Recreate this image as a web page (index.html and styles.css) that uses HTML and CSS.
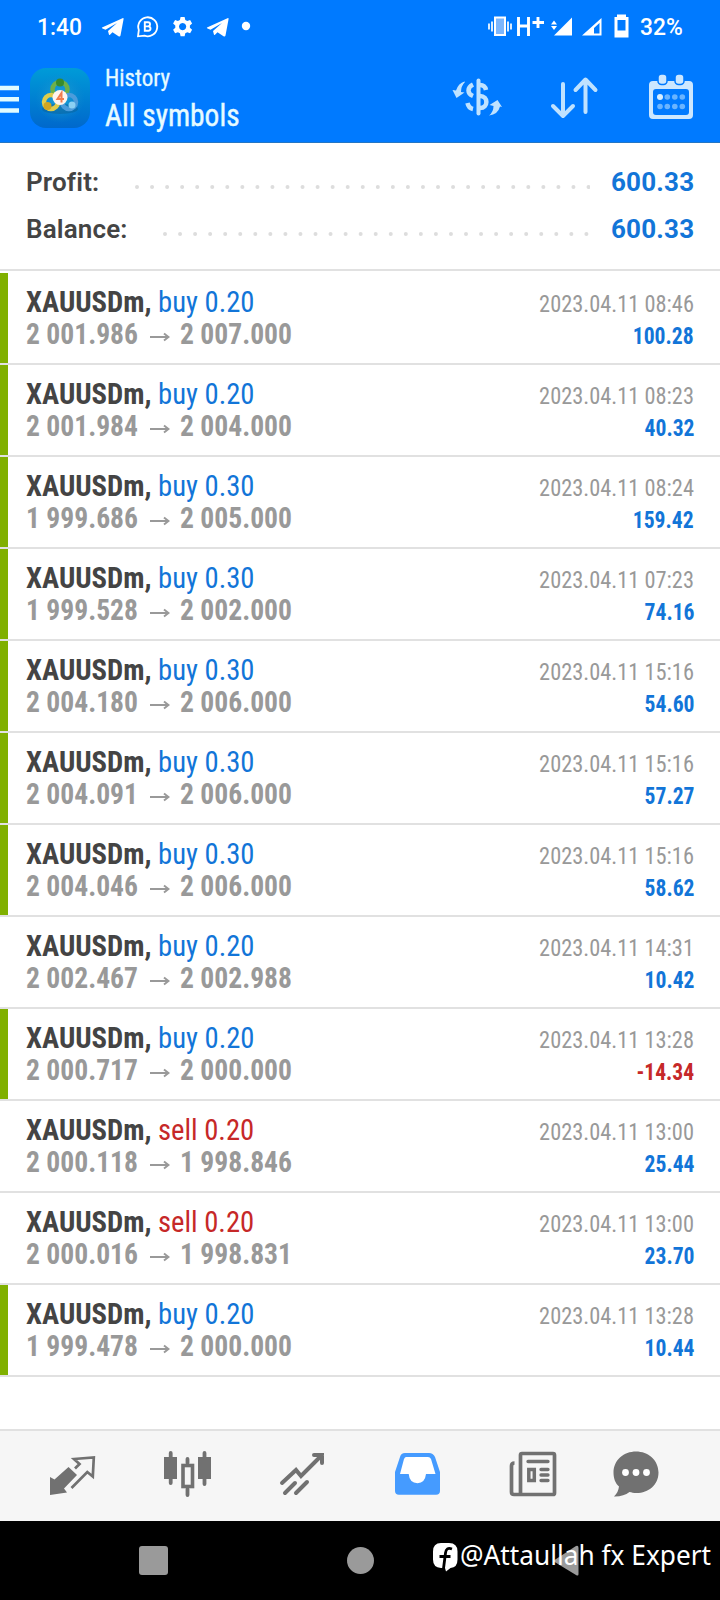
FILE: index.html
```html
<!DOCTYPE html>
<html lang="en">
<head>
<meta charset="utf-8">
<title>History</title>
<link rel="stylesheet" href="styles.css">
</head>
<body>
<header class="top">
  <div class="status">
    <span class="clock">1:40</span>
    <svg class="status-left" viewBox="100 14 152 26" width="152" height="26">
      <g fill="#fff">
        <path id="plane" d="M102 27.500 122.500 18.200Q124 17.800 123.500 19.500L120.500 35.500Q120 37 118.500 36.200L112.500 32.300 110 34.800Q109 35.500 108.800 34L108 31 117 23 105.500 29.800 102.500 28.500Q101.500 28 102 27.500Z"/>
        <use href="#plane" x="105"/>
        <circle cx="246" cy="26" r="4.200"/>
        <path fill-rule="evenodd" d="M180.600 17h4l.7 3 2 1 2.800-1 2 3.500-2.200 2v2.200l2.200 2-2 3.500-2.800-1-2 1.100-.7 2.900h-4l-.7-2.900-2-1.100-2.800 1-2-3.500 2.200-2v-2.200l-2.200-2 2-3.500 2.800 1 2-1zM182.600 23a3.600 3.600 0 1 0 .01 0z"/>
      </g>
      <path d="M138 36.300l.8-6.300A9.500 9.500 0 1 1 144.500 35.700Z" fill="none" stroke="#fff" stroke-width="1.800"/>
      <path d="M144.800 22.300v8.500h3.500a2.200 2.200 0 0 0 0-4.400h-3.500 3.200a2 2 0 0 0 0-4.100z" fill="none" stroke="#fff" stroke-width="1.900"/>
    </svg>
    <svg class="status-right" viewBox="486 12 146 28" width="146" height="28">
      <rect x="495" y="17.500" width="10" height="17.500" fill="#7db6fc" stroke="#fff" stroke-width="2"/>
      <path d="M489 23.500v6M492 21.500v10M508 21.500v10M511 23.500v6" stroke="#fff" stroke-width="1.700"/>
      <path d="M518.500 17v19M528.500 17v19M518.500 26h10M538 17v11M532.500 22.500h11.500" stroke="#fff" stroke-width="2.900" fill="none"/>
      <path d="M554 35.500 572 17.500V35.500ZM551 24.500l3-4 3 4zM551 26l3 4 3-4zM582 35.500 601.500 18V35.500Zm12-2h5.500V23l-5.500 5z" fill="#fff" fill-rule="evenodd"/>
      <path d="M617 17v-2.500h9V17h2.500v20.500h-14V17zM617.500 20v10.500h8V20z" fill="#fff" fill-rule="evenodd"/>
    </svg>
    <span class="percent">32%</span>
  </div>
  <div class="bar">
    <svg class="burger" viewBox="0 0 20 30" width="20" height="30"><path d="M0 3h19M0 14.300h19M0 25.500h19" stroke="#e0fbff" stroke-width="4.500"/></svg>
    <svg class="logo" viewBox="0 0 60 60" width="60" height="60">
      <defs>
        <linearGradient id="sky" x2="0" y2="1"><stop offset="0" stop-color="#009bd8"/><stop offset="1" stop-color="#0068cc"/></linearGradient>
        <radialGradient id="glow"><stop offset="0" stop-color="#22aedb"/><stop offset="1" stop-color="#1488cb" stop-opacity="0"/></radialGradient>
      </defs>
      <rect width="60" height="60" rx="16" fill="url(#sky)"/><circle cx="30" cy="30" r="25" fill="url(#glow)"/>
      <ellipse cx="30" cy="41" rx="18" ry="5" fill="#095f98" opacity=".5"/>
      <g fill="none" stroke-width="4.500">
        <circle cx="30" cy="21.500" r="7.500" stroke="#6eb04a"/><circle cx="21" cy="34" r="7" stroke="#dfcd4c"/><circle cx="39" cy="34" r="7" stroke="#4c9cdb"/>
      </g>
      <circle cx="30" cy="14.500" r="4" fill="#378b2d"/><circle cx="17.500" cy="38" r="4" fill="#d0a520"/><circle cx="42" cy="37" r="3.500" fill="#8bd0f3"/>
      <circle cx="30" cy="29.500" r="7.500" fill="#fff4ed"/><path d="M31.500 34.500V25L27.500 31h6.500" fill="none" stroke="#f07d4f" stroke-width="2"/>
    </svg>
    <div class="titles"><div class="small"><span>History</span></div><div class="big"><span>All symbols</span></div></div>
    <svg class="actions" viewBox="450 70 250 54" width="250" height="54">
      <g fill="none" stroke="#bfe2ff" stroke-linejoin="round">
        <path d="M478.500 80.500v33" stroke-width="4" stroke-linecap="round"/>
        <path d="M486 90q-1-5-6-5M480 96c8.500 0 8.500 12 0 12M473 84.500c-6 3-6 9 0 11.500M467.500 103q1 5 5.500 6" stroke-width="4.500"/>
      </g>
      <path d="M464.500 81.500q-6 1.500-8.500 9l-3.500-.5 4 8 8-5.500-3.500-.5q0-6 4-10zM489 115.500q9-1 11-9l2 .5-4.500-7-8 5 4 1q0 6-4.500 9.500z" fill="#bfe2ff"/>
      <path d="M563 84v31M553 106l10 10 10-10M585.500 112V80M575.500 90l10-10.500 10 10.500" fill="none" stroke="#bfe2ff" stroke-width="4" stroke-linecap="round" stroke-linejoin="round"/>
      <path d="M653 81h36q4 0 4 4v30q0 4-4 4h-36q-4 0-4-4V85q0-4 4-4zM656 89q-3 0-3 3v20q0 3 3 3h30q3 0 3-3V92q0-3-3-3z" fill="#cce7ff" fill-rule="evenodd"/>
      <g fill="#cce7ff" stroke="#007aff" stroke-width="1.500"><rect x="658" y="74" width="9" height="10.500" rx="3.500"/><rect x="675" y="74" width="9" height="10.500" rx="3.500"/></g>
      <g fill="#6ab4ff"><circle cx="660" cy="97" r="3" fill="#d9efff"/><circle cx="667.300" cy="97" r="2.800"/><circle cx="674.800" cy="97" r="2.800"/><circle cx="682.300" cy="97" r="2.800"/><circle cx="660" cy="106.500" r="2.800"/><circle cx="667.300" cy="106.500" r="2.800"/><circle cx="674.800" cy="106.500" r="2.800"/><circle cx="682.300" cy="106.500" r="2.800"/></g>
    </svg>
  </div>
</header>
<section class="summary">
  <div class="total"><b>Profit:</b><svg class="dots" width="458" height="6"><path d="M5 3H457.500" /></svg><strong>600.33</strong></div>
  <div class="total"><b>Balance:</b><svg class="dots" width="430" height="6"><path d="M5 3H428" /></svg><strong>600.33</strong></div>
</section>
<main id="deals"></main>
<nav class="tabs">
  <svg viewBox="0 1431 720 90" width="720" height="90">
    <g fill="none" stroke="#717171" stroke-linecap="round">
      <path d="M75 1468.500l4.500-4.500-5.500-5 19.800-1.500-1 19-5.500-4.500L71.500 1488" stroke-width="2.700" stroke-linecap="butt"/>
      <path d="M50 1477l4.500 2.500 14-12.500 8.500 8-13 13.500 3 4-17 2.500z" fill="#717171" stroke="none"/>
      <path d="M170.700 1453v30M204.500 1453v31M187.500 1459v4M187.500 1489v6" stroke-width="3.800"/>
      <path d="M164 1457h13v22h-13zM198 1457h13v22h-13z" fill="#717171" stroke="none"/>
      <rect x="183" y="1465.500" width="9.500" height="21" stroke-width="3.600"/>
      <path d="M282 1483l14-13 5 6 21-21M314 1455h8v8M285 1493l10-10M296 1493l11-11" stroke-width="4"/>
    </g>
    <path d="M405 1453h24q4 0 6 4l5 15v19q0 3.700-4 3.700h-37q-4 0-4-3.700v-19l5-15q1-4 5-4z" fill="#459bff"/>
    <path d="M406 1457h22q2 0 3 2l4.500 15H426q-1 9-8.500 9.300-8-.3-8.800-9.300H400l4-15q1-2 2-2z" fill="#fff"/>
    <path d="M522 1453.500h31q1.500 0 1.500 1.500v38q0 1.500-1.500 1.500h-31q-1.500 0-1.500-1.500v-38q0-1.500 1.500-1.500zM521 1494.500h-7q-2.500 0-2.500-2.500v-26q0-3 3-3" fill="none" stroke="#717171" stroke-width="3.700"/>
    <path d="M528 1461.500h20M541 1469.500h7M541 1475h7M541 1480.500h7" stroke="#717171" stroke-width="3.300" stroke-linecap="round"/>
    <rect x="528.800" y="1469.500" width="5.500" height="11" fill="none" stroke="#717171" stroke-width="3.500"/>
    <path d="M636 1451.500c12 0 22.500 8.500 22.500 21s-10 20.500-22 20.500c-3 0-5-.5-7-1-4 3-9 4.700-15.500 4.500 3-3 4.500-6 5-10-3.500-3-5.500-8-5.500-14 0-12.500 10.500-21 22.500-21z" fill="#717171"/>
    <g fill="#fff"><circle cx="625.500" cy="1472.500" r="3.400"/><circle cx="636" cy="1472.500" r="3.400"/><circle cx="646.500" cy="1472.500" r="3.400"/></g>
  </svg>
</nav>
<footer class="system">
  <svg class="keys" viewBox="0 1521 720 79" width="720" height="79">
    <rect x="139" y="1546" width="29" height="29" rx="3" fill="#9a9a9a"/>
    <circle cx="360.500" cy="1560.500" r="13.500" fill="#9a9a9a"/>
    <path d="M553 1561 576 1546q2.500-1 2.500 2v26q0 2.500-2.500 1z" fill="#9a9a9a"/>
  </svg>
  <div class="mark">
    <svg viewBox="0 0 26 30" width="26" height="30"><path d="M8 1h8q8.500 0 8.500 8.500v8q0 8-7 8.500l-4.500 3.500-1-3.500H8q-8-.500-8-8.500v-8Q0 1 8 1z" fill="#fff"/><path d="M19 7c-4-1.500-6 0-6.500 4l-2 15.500M6.500 14.500h11" fill="none" stroke="#000" stroke-width="2.800"/></svg>
    <span>@Attaullah fx Expert</span>
  </div>
</footer>
<script src="deals.js"></script>
</body>
</html>
```

FILE: deals.js
```js
const deals = [
  [1, 'buy', '0.20', '2 001.986', '2 007.000', '2023.04.11 08:46', '100.28'],
  [1, 'buy', '0.20', '2 001.984', '2 004.000', '2023.04.11 08:23', '40.32'],
  [1, 'buy', '0.30', '1 999.686', '2 005.000', '2023.04.11 08:24', '159.42'],
  [1, 'buy', '0.30', '1 999.528', '2 002.000', '2023.04.11 07:23', '74.16'],
  [1, 'buy', '0.30', '2 004.180', '2 006.000', '2023.04.11 15:16', '54.60'],
  [1, 'buy', '0.30', '2 004.091', '2 006.000', '2023.04.11 15:16', '57.27'],
  [1, 'buy', '0.30', '2 004.046', '2 006.000', '2023.04.11 15:16', '58.62'],
  [0, 'buy', '0.20', '2 002.467', '2 002.988', '2023.04.11 14:31', '10.42'],
  [1, 'buy', '0.20', '2 000.717', '2 000.000', '2023.04.11 13:28', '-14.34'],
  [0, 'sell', '0.20', '2 000.118', '1 998.846', '2023.04.11 13:00', '25.44'],
  [0, 'sell', '0.20', '2 000.016', '1 998.831', '2023.04.11 13:00', '23.70'],
  [1, 'buy', '0.20', '1 999.478', '2 000.000', '2023.04.11 13:28', '10.44']
];
document.getElementById('deals').innerHTML = deals.map(([tp, side, lot, open, close, time, gain]) => `
<article class="deal${tp ? ' tp' : ''}">
  <div class="left">
    <div class="symbol"><b>XAUUSDm,</b><span class="${side}">${side} ${lot}</span></div>
    <div class="prices"><b>${open}</b><svg width="20" height="12" viewBox="0 0 20 12"><path d="M0 6h18M14 2.500l4.500 3.500-4.500 3.500" fill="none" stroke="#999" stroke-width="2"/></svg><b>${close}</b></div>
  </div>
  <div class="right"><div class="time"><span>${time}</span></div><div class="gain${gain[0] === '-' ? ' loss' : ''}"><b>${gain}</b></div></div>
</article>`).join('');
```

FILE: styles.css
```css
* { box-sizing: border-box; }
body { margin: 0; width: 720px; height: 1600px; overflow: hidden; background: #fff; font-family: "Roboto Condensed", Roboto, sans-serif; font-stretch: 75%; display: flex; flex-direction: column; }
svg { display: block; flex: none; }
span, b, strong { white-space: nowrap; }
.top { height: 143px; background: #007aff; border-bottom: 1px solid #2476c4; color: #e6fbff; }
.status { height: 54px; display: flex; align-items: flex-start; font: 500 24px/28px Roboto, sans-serif; font-stretch: 100%; padding: 13px 0 0 37px; color: #fff; }
.clock { width: 63px; transform: scaleX(.95); transform-origin: left; }
.percent { transform: scaleX(.95); transform-origin: left; }
.status-left { margin-top: 1px; }
.status-right { margin: -1px 8px 0 234px; }
.bar { display: flex; height: 88px; align-items: flex-start; }
.burger { margin-top: 31px; }
.logo { margin: 14px 0 0 10px; }
.titles { margin-left: 15px; width: 345px; }
.titles span { display: inline-block; transform: scaleX(.96); transform-origin: left; }
.small { font-size: 24px; line-height: 28px; padding-top: 10px; -webkit-text-stroke: .3px; }
.big { font-size: 32px; line-height: 40px; margin-top: 3px; -webkit-text-stroke: .4px; }
.big span { transform: scaleX(.92); }
.actions { margin-top: 16px; }
.summary { height: 128px; border-bottom: 2px solid #e1e1e1; padding: 15px 26px 0; color: #444; }
.total { display: flex; justify-content: space-between; height: 47px; align-items: center; font: 26px/46px Roboto, sans-serif; font-stretch: 100%; }
.total b { font-weight: 600; margin-right: auto; letter-spacing: .15px; }
.total strong { font-weight: 700; color: #1275d8; width: 83px; margin-left: 21px; letter-spacing: .2px; }
.dots { margin-top: 10px; }
.dots path { stroke: #ddd; stroke-width: 4; stroke-linecap: round; stroke-dasharray: 0 15.050; }
main { padding-top: 2px; }
.deal { height: 92px; border-bottom: 2px solid #e1e1e1; padding: 13px 26px 0; display: flex; justify-content: space-between; position: relative; }
.deal.tp::before { content: ""; position: absolute; left: 0; top: 0; bottom: 0; width: 8px; background: #80b000; }
.symbol, .prices { display: flex; align-items: center; height: 32px; font-size: 30px; line-height: 32px; }
.symbol b, .symbol span, .prices b { transform-origin: left; }
.symbol b { width: 132px; color: #444; transform: scaleX(.955); }
.symbol span { transform: scaleX(.955); }
.prices { color: #999; }
.prices b { width: 124px; transform: scaleX(.92); }
.prices svg { margin: 6px 10px 0 0; }
.buy, .gain { color: #1275d8; }
.sell, .gain.loss { color: #c62828; }
.time, .gain { text-align: right; font-size: 24px; height: 32px; line-height: 36px; }
.time span, .gain b { display: inline-block; transform-origin: right; }
.time span { transform: scaleX(.933); }
.gain b { transform: scaleX(.9); }
.time { color: #999; }
.tabs { margin-top: auto; height: 92px; border-top: 2px solid #e1e1e1; background: #f6f6f6; }
.system { height: 79px; background: #000; position: relative; }
.mark { position: absolute; left: 433px; top: 21px; display: flex; gap: 1px; color: #fff; font: 27px/30px "Noto Sans", sans-serif; }
.mark span { transform: scaleX(.972); transform-origin: left; margin-top: -2px; }
```
